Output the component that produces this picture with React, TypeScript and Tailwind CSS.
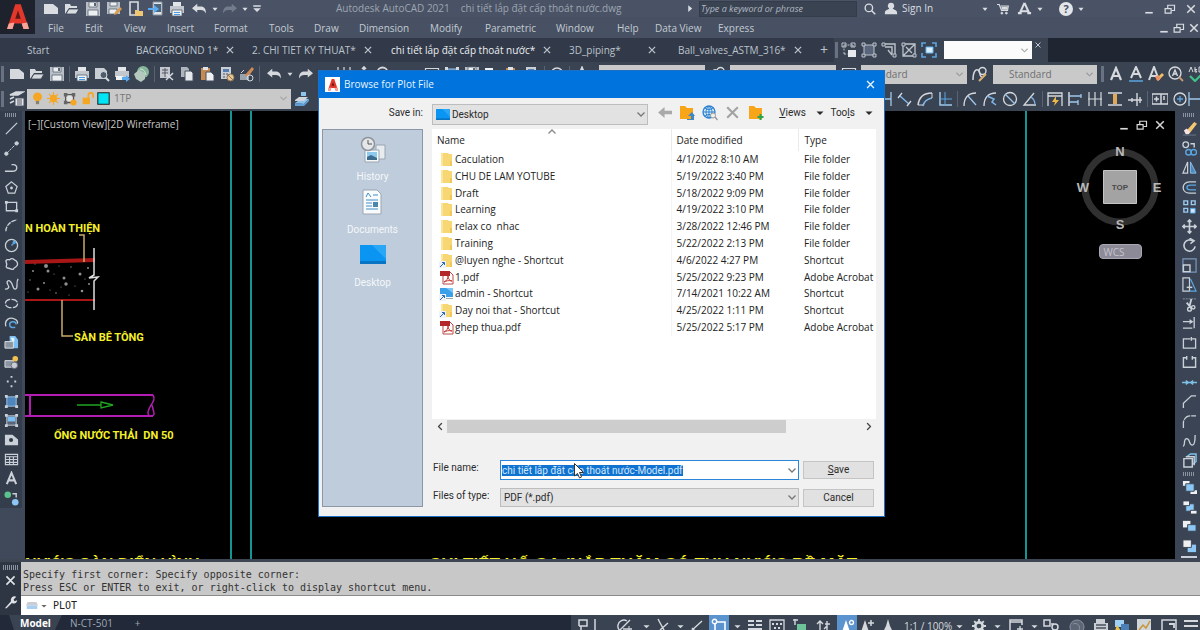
import { useEffect, useRef, type ReactNode } from 'react';

const UI_FONT = "font-['Open_Sans','Noto_Sans',sans-serif]";
const FORM_FONT = "font-['Roboto','Noto_Sans',sans-serif]";

/* 16x16 glyphs, drawn with currentColor unless a tool has its own colour */
const ICONS: Record<string, ReactNode> = {
  new: <path d="M1 3h9l5 4v6H1z" fill="currentColor" stroke="none" />,
  open: <><path d="M1 13V3h5l1 2h6v2H5z" fill="currentColor" stroke="none" /><path d="M5 8h10l-3 5H2z" fill="currentColor" stroke="#3b4453" strokeWidth=".8" /></>,
  save: <><path d="M1 1h14v14H1z" fill="#b9bfc6" stroke="none" /><path d="M4 1h8v5H4zM3 9h10v6H3z" fill="#eceff2" stroke="#5a6472" strokeWidth=".8" /><path d="M9 2h2v3H9z" fill="#5a6472" stroke="none" /></>,
  saveAs: <><path d="M1 1h13v12H1z" fill="#b9bfc6" stroke="none" /><path d="M4 1h7v4H4zM3 8h8v5H3z" fill="#eceff2" stroke="#5a6472" strokeWidth=".8" /><path d="M8 14l1-3 5-5 2 2-5 5z" fill="#d99b4e" stroke="none" /></>,
  openWeb: <><path d="M3 1h8v13H3z" fill="none" strokeWidth="1.6" /><path d="M8 9h3l1 1h4v5H8z" fill="#f0c674" stroke="none" /></>,
  saveWeb: <><path d="M5 1h9v13H5z" fill="#dfe5ea" stroke="#8a939e" /><path d="M6 3h7v8H6z" fill="#4c6680" stroke="none" /><path d="M0 7h6V4l5 4-5 4V9H0z" fill="#5aaaf0" stroke="none" /></>,
  plot: <><path d="M4 1h8v4H4z" fill="#e3e6e9" stroke="none" /><path d="M1 5h14v7H1z" fill="#c3c8ce" stroke="none" /><path d="M3 9h10v6H3z" fill="#f1f4f6" stroke="#566170" strokeWidth=".8" /><path d="M5 11.500h6M5 13.500h6" stroke="#4b9ae4" /></>,
  preview: <><path d="M1 2h9l3 3v8H1z" fill="#c9ced4" stroke="none" /><circle cx="9.500" cy="9" r="3.500" fill="#4f5c6b" /><path d="M12 12l3 3" strokeWidth="2" /></>,
  publish: <><path d="M4 1h8v4H4z" fill="#e3e6e9" stroke="none" /><path d="M1 5h14v6H1z" fill="#c3c8ce" stroke="none" /><path d="M2 10h7v4H2z" fill="#f1f4f6" stroke="none" /><path d="M8 11h4V9l4 4-4 3v-2H8z" fill="#5aaaf0" stroke="none" /></>,
  globe3d: <><circle cx="9" cy="6" r="6" fill="#86b59b" stroke="none" /><path d="M0 8l5-4 6 3v6l-4 3-5-3z" fill="#b4c9bd" stroke="none" /><path d="M6 3c3 0 5 2 6 6" stroke="#d7ebdf" /></>,
  cut: <><path d="M1 1h10v11H1z" fill="#c3c8ce" stroke="none" /><path d="M3 4h6M3 7h6M6 2v9" stroke="#556" /><path d="M7 8l7 6M14 7l-7 7" strokeWidth="1.500" /></>,
  copy: <><path d="M2 1h6l2 2v8H2z" fill="#aeb5bd" stroke="none" /><path d="M6 5h6l2 2v8H6z" fill="#e6e9ec" stroke="#48515f" /></>,
  paste: <><path d="M2 2h9v12H2z" fill="#c58b52" stroke="none" /><path d="M4 1h5v3H4z" fill="#dfe3e7" stroke="none" /><path d="M7 6h5l3 3v6H7z" fill="#eef0f2" stroke="#48515f" /></>,
  match: <><path d="M2 1h10v12H2z" fill="#c9ced4" stroke="none" /><path d="M4 3h6v3H4z" fill="#557fb0" stroke="none" /><path d="M4 8h2m1 0h2M4 11h2" stroke="#556" /><circle cx="11.500" cy="11.500" r="3.500" fill="#e6c79a" stroke="#8b7250" /><path d="M9 9l5 5" stroke="#8b7250" /></>,
  brush: <><path d="M1 8h9v6H1z" fill="#9aa2ac" stroke="none" /><path d="M6 9l7-8 2 2-6 8z" fill="#cf8a55" stroke="none" /><circle cx="11" cy="12" r="3" fill="none" /><path d="M2 7l3-3" /></>,
  undo: <path d="M0 7l6-5v3h4c4 0 6 3 6 8-2-3-3-4-6-4H6v3z" fill="currentColor" stroke="none" />,
  redo: <path d="M16 7l-6-5v3H6c-4 0-6 3-6 8 2-3 3-4 6-4h4v3z" fill="currentColor" stroke="none" />,
  caret: <path d="M4 6h8l-4 5z" fill="currentColor" stroke="none" />,
  caretBig: <path d="M1 5h14l-7 7z" fill="currentColor" stroke="none" />,
  barCaret: <path d="M3 3h10v2H3zM3 7h10l-5 5z" fill="currentColor" stroke="none" />,
  play: <path d="M4 2l7 6-7 6z" fill="currentColor" stroke="none" />,
  search: <><circle cx="6.500" cy="6.500" r="5" strokeWidth="1.800" /><path d="M10 10l5 5" strokeWidth="2" /></>,
  user: <path d="M8 1a3.500 3.500 0 0 1 2 6.500c1 1.500 5 1.500 5 5V14H1v-1.500c0-3.500 4-3.500 5-5A3.500 3.500 0 0 1 8 1z" fill="currentColor" stroke="none" />,
  cart: <><path d="M0 2h3l3 8h8l1-6H5" strokeWidth="1.600" /><path d="M6 5h8v4H6z" fill="currentColor" stroke="none" /><circle cx="6.500" cy="13.500" r="1.300" fill="currentColor" /><circle cx="12.500" cy="13.500" r="1.300" fill="currentColor" /></>,
  appA: <><path d="M8 2l5 11M8 2L3 13M3 11h10" strokeWidth="2.200" /><path d="M1 13h4M11 13h4" strokeWidth="2.500" /></>,
  min: <path d="M3 13h10" strokeWidth="2.200" />,
  restore: <><path d="M1.500 7.500h8v6h-8z" strokeWidth="1.600" /><path d="M5 7V3h9v7h-4" strokeWidth="1.600" /></>,
  close: <path d="M3 3l10 10M13 3L3 13" strokeWidth="2" />,
  layers: <><path d="M1 4l6-3h7l-5 3zM1 8l4-2M1 12l4-2" fill="currentColor" strokeWidth="1.500" /><path d="M6 7h9v8H6z" fill="#e3e6e9" stroke="#48515f" /><path d="M8 9h5M8 11h5M8 13h5" stroke="#556" /></>,
  layerPrev: <><path d="M1 12l6-4h8l-5 5z" fill="#8dc4ee" stroke="none" /><path d="M1 12v3h9l5-5v-2l-5 5z" fill="#5f9fd4" stroke="none" /><path d="M1 9l4-3h9l-4 4H1z" fill="#cfd5db" stroke="none" /><path d="M7 1h5v4H7z" fill="#8dc4ee" stroke="none" /></>,
  bulb: <><circle cx="8" cy="6" r="5.500" fill="#f5a623" stroke="none" /><path d="M6 11h4v4H6z" fill="#8b8070" stroke="none" /></>,
  sun: <><circle cx="8" cy="8" r="4.500" fill="#f5a623" stroke="none" /><path d="M8 0v16M0 8h16M2.500 2.500l11 11M13.500 2.500l-11 11" stroke="#f5a623" strokeWidth="1.300" /></>,
  vpFreeze: <><path d="M3 3h9v9H3z" fill="#e4e4e4" stroke="#555" strokeWidth="1.500" /><path d="M1 1h4v4H1zM10 1h4v4h-4zM1 10h4v4H1z" fill="#666" stroke="none" /><circle cx="12" cy="12" r="3.500" fill="#f5a623" stroke="none" /></>,
  lock: <><path d="M2 7h9v8H2z" fill="#f5a623" stroke="none" /><path d="M9 7V4c0-4 6-4 6 0v3" stroke="#f5a623" strokeWidth="2" /></>,
  swatch: <path d="M1 1h14v14H1z" fill="#00e5f5" stroke="#222" strokeWidth="1.300" />,
  grpA: <><path d="M3 3h9M3 3v9M3 12h4M12 3v3" strokeDasharray="2 1.500" /><path d="M1 1h4v4H1zM10 1h4v4h-4z" /><path d="M7 8h8v7H7z" fill="#e8ebee" stroke="none" /></>,
  grpB: <><path d="M3 3h10v10H3z" fill="#59657a" /><path d="M1 1h3v3H1zM12 1h3v3h-3zM1 12h3v3H1zM12 12h3v3h-3z" fill="#48515f" /></>,
  grpC: <><path d="M1 2h13v12M4 5h7v7M7 8l4 5" strokeWidth="1.400" /><path d="M1 1h3v3H1zM12 12h3v3h-3z" fill="#48515f" /></>,
  grpD: <><path d="M2 2h12v12H2zM2 14L14 2M5 5l6 6" strokeWidth="1.300" /><path d="M1 1h3v3H1zM12 12h3v3h-3z" fill="#48515f" /></>,
  grpE: <><path d="M5 5h7v6H5z" fill="#d9efff" stroke="#66b5f0" /><path d="M1 5V1h4M11 1h4v4M15 11v4h-4M5 15H1v-4" stroke="#5aa5e0" strokeWidth="1.600" /></>,
  leader: <><path d="M1 14C1 5 4 3 6 4c3 1 1 7 4 7" strokeWidth="1.500" /><circle cx="10.500" cy="5" r="3.500" strokeWidth="1.400" /><path d="M7 15l7-7" stroke="#d8b070" strokeWidth="2" /></>,
  letter: <path d="M3 14L8 2l5 12M5 10h6" strokeWidth="2.200" />,
  letterU: <><path d="M3 12L8 1l5 11M5 8h6" strokeWidth="2" /><path d="M1 15h14" stroke="#5aa5e0" strokeWidth="1.500" /></>,
  letterE: <><path d="M1 14L6 1l5 13M3 10h6" strokeWidth="2" /><path d="M8 13l6-6 2 2-6 6z" fill="#f0c060" stroke="none" /><path d="M7 11l3-2 3 3-3 3z" fill="#ef8f6a" stroke="none" /></>,
  findA: <><circle cx="7" cy="7" r="6" strokeWidth="1.400" /><path d="M4.500 10L7 4l2.500 6M5.500 8h3" strokeWidth="1.400" /><path d="M11 11l4 4" stroke="#c79a72" strokeWidth="1.800" /></>,
  spell: <><path d="M1 6l2-5 2 5M7 1v5h2l-2-2.500h2M14 1h-3v5h3" /><path d="M2 10l5 5 8-8" stroke="#3fc18a" strokeWidth="2.200" /></>,
  dimLin: <path d="M2 1v14M14 1v14M2 8h12" stroke="#9ec7ea" strokeWidth="1.300" />,
  dimAln: <><path d="M3 5l9 8" stroke="#7fb7e8" strokeWidth="1.500" /><path d="M1 7l4-5M10 15l4-5" strokeWidth="1.300" /></>,
  dimArc: <><path d="M1 14C2 6 7 2 15 2" strokeWidth="1.500" /><path d="M6 15c1-5 4-7 9-8" stroke="#7fb7e8" strokeWidth="1.500" /><path d="M1 14h5M15 2v5" /></>,
  dimOrd: <><path d="M3 1v13h12" stroke="#9ec7ea" strokeWidth="1.500" /><path d="M8 1v13M3 8h12" stroke="#5aa5e0" /></>,
  dimRad: <><path d="M14 2C6 2 2 7 2 15" strokeWidth="1.300" /><path d="M14 14L6 5" stroke="#9ec7ea" strokeWidth="1.300" /></>,
  dimJog: <><path d="M14 2C6 2 2 7 2 15" strokeWidth="1.300" /><path d="M14 14l-4-3 2-3-7-3" stroke="#7fb7e8" strokeWidth="1.500" /></>,
  dimDia: <><circle cx="8" cy="8" r="6.500" strokeWidth="1.300" /><path d="M3 3l10 10" stroke="#9ec7ea" strokeWidth="1.300" /></>,
  dimAng: <><path d="M14 14H2L12 2" strokeWidth="1.300" /><path d="M9 6c3 2 4 4 4 8" stroke="#7fb7e8" strokeWidth="1.300" /></>,
  dimQk: <><path d="M1 15V2h14v13M1 5h14" strokeWidth="1.300" /><path d="M9 5l-4 6h3l-1 4 5-6H9z" fill="#f0b84a" stroke="none" /></>,
  dimBase: <><path d="M2 1v14" strokeWidth="1.500" /><path d="M2 5h12M2 11h9M14 3v4M11 9v5" stroke="#9ec7ea" strokeWidth="1.300" /></>,
  dimCont: <path d="M2 1v14M8 1v14M14 1v14M1 8h14" strokeWidth="1.200" />,
  dimSp: <><path d="M1 2h14M1 14h14" strokeWidth="1.500" /><path d="M6 3h4v10H6z" fill="#e0a958" stroke="none" /></>,
  dimBr: <path d="M1 9h14M10 2v13M13 6v6M5 7v4" strokeWidth="1.400" />,
  tol: <><path d="M0 3h16v10H0z" strokeWidth="1.300" /><path d="M9 3v10M2 8h5M4.500 5.500v5M12 5v4" strokeWidth="1.500" /></>,
  center: <><circle cx="8" cy="8" r="6" strokeWidth="1.300" /><path d="M8 5v6M5 8h6" stroke="#5aa5e0" strokeWidth="1.300" /></>,
  line: <path d="M2 14L14 2" strokeWidth="1.400" />,
  xline: <><path d="M3 13L13 3" strokeDasharray="3 1" /><circle cx="2.500" cy="13.500" r="1.800" fill="currentColor" /><circle cx="13.500" cy="2.500" r="1.800" fill="currentColor" /></>,
  pline: <path d="M1 12h8c6 0 6-7 1-7H8" strokeWidth="1.400" />,
  polygon: <><path d="M8 2l6 5-2.500 7h-7L2 7z" strokeWidth="1.300" /><circle cx="8" cy="8.500" r="1.500" fill="currentColor" stroke="none" /></>,
  rect: <><path d="M2.500 3.500h11v9h-11z" strokeWidth="1.400" /><path d="M1 2h3v3H1zM12 11h3v3h-3z" fill="currentColor" stroke="none" /></>,
  arc: <path d="M2 14C2 8 7 3 14 2" strokeWidth="1.400" strokeDasharray="5 1" />,
  circle: <><circle cx="8" cy="8" r="6.500" strokeWidth="1.400" /><path d="M8 8l4-4" stroke="#5aa5e0" strokeWidth="1.500" /><circle cx="11" cy="4.500" r="1.800" fill="#5aa5e0" stroke="none" /></>,
  revcloud: <path d="M2 4c1-2 3-1 4-1 2-2 4-1 5 0 3 1 4 4 3 6s-3 2-4 4c-2 1-3-1-5-1-3 0-3-2-2-4z" strokeWidth="1.400" />,
  spline: <path d="M1 13c4 0 5-2 3-5-2-4 1-5 3-3 3 3 2 8 5 8 4-1 0-6 3-11" strokeWidth="1.400" />,
  ellipse: <ellipse cx="8" cy="8" rx="6.500" ry="4.500" strokeWidth="1.400" strokeDasharray="7 1.500" />,
  earc: <><path d="M2 11C0 4 6 1 11 3c3 1 4 4 3 5" strokeWidth="1.400" /><path d="M13 9c0-4-7-4-7 0 0 3 3 4 6 3" stroke="#5aa5e0" strokeWidth="1.600" /></>,
  insert: <><path d="M6 1h6l3 4v9H6z" fill="#7cc0f3" stroke="none" /><path d="M1 7h9v7H1z" fill="#8b94a1" stroke="#dde1e5" /><path d="M7 3h4v4H9z" fill="#e9f4fd" stroke="none" /></>,
  block: <><path d="M1 6h9v7H1z" fill="#8b94a1" stroke="#dde1e5" /><circle cx="12" cy="4" r="3" fill="#f2c14e" stroke="none" /><circle cx="11" cy="11" r="3.500" fill="#c9ced4" stroke="#667" /></>,
  points: <path d="M8 2v2M8 12v2M3 8h2M11 8h2" strokeWidth="2" />,
  hatch: <><path d="M3 3h10v10H3z" fill="#4f86bb" stroke="#9cc4e6" /><path d="M1 1h3v3H1zM12 1h3v3h-3zM1 12h3v3H1zM12 12h3v3h-3z" fill="currentColor" stroke="none" /></>,
  gradient: <><path d="M3 3h10v10H3z" fill="#59657a" stroke="#c9ced4" /><path d="M4 4h8v5H4z" fill="#7cc0f3" stroke="none" /><path d="M1 1h3v3H1zM12 1h3v3h-3zM1 12h3v3H1zM12 12h3v3h-3z" fill="currentColor" stroke="none" /></>,
  region: <><path d="M1 3h8l6 5v6H1z" fill="currentColor" stroke="none" /><circle cx="7.500" cy="8.500" r="2.200" fill="#303846" stroke="none" /></>,
  table: <path d="M1.500 2.500h13v11h-13zM1 5h14M1 8h14M1 11h14M6 5v9M10 5v9" strokeWidth="1.200" />,
  addSel: <><circle cx="4" cy="4" r="3.500" fill="#5cc28d" stroke="none" /><circle cx="12" cy="12" r="3.500" fill="#8cc7f5" stroke="none" /><path d="M9 3h4v4" strokeWidth="1.500" /></>,
  erase: <><path d="M5 10l8-9 3 2-7 9z" fill="#f4c870" stroke="none" /><path d="M2 10l3-2 4 4-2 2H4z" fill="#f8e3e4" stroke="none" /><path d="M1 15h14" stroke="#6d7a8c" /></>,
  copy2: <><circle cx="4" cy="4" r="3" strokeWidth="1.400" /><path d="M9 3h4v4" strokeWidth="1.500" /><circle cx="7" cy="12" r="3" stroke="#5aa5e0" strokeWidth="1.500" /><circle cx="12.500" cy="12" r="3" stroke="#5aa5e0" strokeWidth="1.500" /></>,
  mirror: <><path d="M6 2v12H1z" strokeWidth="1.300" /><path d="M9 2v12h6z" fill="#4f86bb" stroke="#8cc0ec" /></>,
  offset: <><path d="M15 2H8C-1 2-1 14 8 14h7" strokeWidth="1.400" /><path d="M15 5.500H9c-5 0-5 5 0 5h6" stroke="#5aa5e0" strokeWidth="1.400" /></>,
  array: <><path d="M2 2h4v4H2zM10 2h4v4h-4zM2 10h4v4H2z" stroke="#9cc9ee" strokeWidth="1.500" /><path d="M9 10h5v5H9z" fill="#cfe6fa" stroke="#5aa5e0" /></>,
  move: <path d="M8 1v14M1 8h14M6 3l2-2 2 2M6 13l2 2 2-2M3 6L1 8l2 2M13 6l2 2-2 2" strokeWidth="1.700" />,
  rotate: <><path d="M12 3.500A6 6 0 1 0 14 9" strokeWidth="1.700" /><path d="M8 0l5 3-4 3" strokeWidth="1.500" /></>,
  scale: <><path d="M1 1h14v14H1z" stroke="#7898ba" strokeWidth="1.300" /><path d="M1.500 7.500h7v7h-7z" strokeWidth="1.500" /></>,
  stretch: <><path d="M1 1h7v14H1z" strokeWidth="1.300" /><path d="M9 2l6 13H8" stroke="#5aa5e0" strokeWidth="1.300" /><path d="M5 11h6" strokeWidth="1.600" /></>,
  trim: <><path d="M1 2h14" strokeDasharray="2 1" stroke="#8a95a5" /><path d="M10 2L8 10M5 6l5 6" strokeWidth="2" /><circle cx="8" cy="13" r="2" strokeWidth="1.500" /><circle cx="12" cy="11" r="1.800" strokeWidth="1.500" /></>,
  extend: <path d="M1 6h9M8 4l3 2-3 2M13 1v12M1 13h10" strokeWidth="1.400" />,
  breakPt: <path d="M10 3h4.500v10h-13V3H9M10 1v4" strokeWidth="1.400" />,
  breakIt: <path d="M5 3H1.500v10h13V3H11M5 1v4M11 1v4" strokeWidth="1.500" />,
  join: <path d="M0 8h16M4 6l3 2-3 2M12 6L9 8l3 2" stroke="#7cc0e8" strokeWidth="1.400" />,
  chamfer: <path d="M1.500 15v-5L10 2h5" strokeWidth="1.400" />,
  fillet: <path d="M1.500 15V9C2 5 5 2 9 2h6" strokeWidth="1.400" strokeDasharray="8 1" />,
  blend: <path d="M1 14c3 0 0-8 4-8s2 7 6 7c3 0 3-6 3-11" strokeWidth="1.400" />,
  explode: <><path d="M5 4l4-3h6v8l-3 3" stroke="#7cc0e8" strokeWidth="1.600" /><path d="M2 6h9v9H2zM4 4h9v9" strokeWidth="1.500" /></>,
  orderFront: <><path d="M1 1h7v5H1zM9 11h7v4H9z" fill="#eef0f2" stroke="none" /><path d="M4 4h9v8H4z" fill="#8cc7f5" stroke="#3b4453" /></>,
  orderBack: <><path d="M4 4h9v8H4z" fill="#8cc7f5" stroke="#3b4453" /><path d="M1 1h7v5H1zM9 11h7v4H9z" fill="#eef0f2" stroke="#3b4453" /></>,
  orderUp: <><path d="M1 2h8v7H1z" fill="#eef0f2" stroke="none" /><path d="M6 6h9v7H6z" fill="#8cc7f5" stroke="#3b4453" /></>,
  orderDn: <><path d="M6 6h9v8H6z" fill="#8cc7f5" stroke="none" /><path d="M1 1h9v8H1z" fill="#eef0f2" stroke="#3b4453" /></>,
  wrench: <path d="M1 15l7-8c-1-4 3-7 6-5l-3 3 1 2 3-1c0 3-3 5-6 3l-6 6z" fill="currentColor" stroke="none" />,
  infer: <path d="M6 8V2h8v6H6M2 14h6V8" strokeWidth="1.500" />,
  ortho: <path d="M3 1v12h10" strokeWidth="1.500" />,
  polar: <><path d="M10 3A6 6 0 1 0 8 14M3 12L13 2M6 11h9" strokeWidth="1.400" /><path d="M12 8v6" /></>,
  iso: <path d="M3 1l7 13M13 5L5 12" strokeWidth="1.400" />,
  track: <path d="M1 14L13 3M3 10l3 3" strokeWidth="1.400" />,
  osnap: <><path d="M4 4h10v11M4 4v11" strokeWidth="1.600" /><circle cx="3.500" cy="3.500" r="2.200" fill="#5b93cf" strokeWidth="1.400" /></>,
  lwt: <path d="M1 3h6M9 3h6M1 7h6M9 7h6M1 11h14" strokeWidth="2" />,
  transp: <><path d="M1 2h14v12H1z" strokeWidth="1.300" /><path d="M3 5h2v2H3zM7 5h2v2H7zM11 5h2v2h-2zM5 9h2v2H5zM9 9h2v2H9z" fill="currentColor" stroke="none" /></>,
  cycle: <><path d="M1 2h5M3 1v6" strokeWidth="1.400" /><path d="M5 6h9v9H5z" fill="#6fc39a" stroke="none" /></>,
  ucs: <path d="M4 14V3M1 6l3-3 3 3M8 11l3-3M11 3v11M9 6h5" strokeWidth="1.400" />,
  anno: <><path d="M7 2l4 12H3z" fill="currentColor" stroke="none" /><circle cx="12.500" cy="4.500" r="2" strokeWidth="1.300" /></>,
  annoAdd: <><path d="M6 2l4 12H2z" fill="currentColor" stroke="none" /><path d="M12 2v6M9 5h6" strokeWidth="1.500" /></>,
  annoScale: <path d="M8 1l2 7 3 6H3l3-6z" fill="currentColor" stroke="none" />,
  gear: <><circle cx="8" cy="8" r="4.200" strokeWidth="3" /><path d="M8 0v3M8 13v3M0 8h3M13 8h3M2.500 2.500l2 2M11.500 11.500l2 2M13.500 2.500l-2 2M4.500 11.500l-2 2" strokeWidth="2.200" /></>,
  monitor: <><path d="M11 14H2V2h12v5M2 4h12" strokeWidth="1.500" /><path d="M12 8v6M9 11h6" strokeWidth="1.300" /></>,
  units: <><path d="M1 2h6v6H1zM8 6h3" strokeWidth="1.500" /><circle cx="12" cy="9" r="3" strokeWidth="1.500" /></>,
  disk: <><circle cx="8" cy="9" r="7" fill="#5d6675" stroke="#8b93a0" /><path d="M4 6c4-2 8 2 6 6" stroke="#8b93a0" /></>,
  printer: <><path d="M3 1h9v4H3zM1 5h14v8H1z" fill="#c9ced4" stroke="none" /><path d="M3 7h10M3 10h10" stroke="#48515f" strokeWidth="1.400" /></>,
  hw: <><path d="M1 2h9v7H1z" fill="#9fd0f5" stroke="none" /><path d="M7 6h8v7H7z" fill="#4b7fb5" stroke="none" /><path d="M3 7l4 6H1z" fill="#e8c24a" stroke="none" /></>,
  perf: <><path d="M1 1h14v14H1z" fill="#cfd4d9" stroke="none" /><path d="M3 12l4-5 3 3 4-7" stroke="#c99436" strokeWidth="1.500" /></>,
  clean: <><path d="M1 2h14v12H1z" strokeWidth="1.500" /><path d="M8 6h5v4" strokeWidth="1.800" /></>,
  menu: <path d="M1 3h14M1 8h14M1 13h14" strokeWidth="1.800" />,
};

function Icon({ name, className = 'size-4' }: { name: string; className?: string }) {
  return (
    <svg viewBox="0 0 16 16" className={`shrink-0 ${className}`} fill="none" stroke="currentColor" aria-hidden="true">
      {ICONS[name]}
    </svg>
  );
}

function Tool({ name, className = 'w-5', icon = 'size-4' }: { name: string; className?: string; icon?: string }) {
  return (
    <button type="button" aria-label={name} className={`flex shrink-0 items-center justify-center ${className}`}>
      <Icon name={name} className={icon} />
    </button>
  );
}

const Tools = ({ names, className }: { names: string[]; className?: string }) => (
  <>{names.map((n) => <Tool key={n} name={n} className={className} />)}</>
);

const Grip = () => <span className="mx-px h-4 w-[3px] shrink-0 bg-[#687283]" />;
const Sep = () => <span className="mx-[2px] h-4 w-px shrink-0 bg-[#596374]" />;

function RedA({ className }: { className: string }) {
  return (
    <svg viewBox="0 0 24 28" className={className} aria-hidden="true">
      <path d="M0 27L9 0h6l9 27h-6l-2-6H8l-2 6z" fill="#e2382c" />
      <path d="M12 7l3 9H9z" fill="#5d1713" />
      <path d="M0 27l2-6 6-1-2 7zM18 27l-2-6 6-1 2 7z" fill="#f6a59b" />
    </svg>
  );
}

/* ---------- top chrome ---------- */

const MENUS = [
  ['File', 'w-[37px]'], ['Edit', 'w-[39px]'], ['View', 'w-[43px]'], ['Insert', 'w-[47px]'],
  ['Format', 'w-[55px]'], ['Tools', 'w-[45px]'], ['Draw', 'w-[45px]'], ['Dimension', 'w-[71px]'],
  ['Modify', 'w-[55px]'], ['Parametric', 'w-[71px]'], ['Window', 'w-[61px]'], ['Help', 'w-[38px]'],
  ['Data View', 'w-[63px]'], ['Express', 'w-[40px]'],
];

const FILE_TABS = [
  { name: 'Start', width: 'w-[109px]' },
  { name: 'BACKGROUND 1*', width: 'w-[116px]' },
  { name: '2. CHI TIET KY THUAT*', width: 'w-[139px]' },
  { name: 'chi tiết lắp đặt cấp thoát nước*', width: 'w-[178px]', active: true },
  { name: '3D_piping*', width: 'w-[109px]' },
  { name: 'Ball_valves_ASTM_316*', width: 'w-[136px]' },
];

function Header() {
  return (
    <header className="flex h-[38px] shrink-0 bg-[#475163] text-[#d9dde2]">
      <div className="flex h-[34px] w-[35px] shrink-0 items-center justify-center bg-[#1d222c]">
        <RedA className="h-[26px] w-[22px]" />
      </div>
      <div className="flex min-w-0 flex-1 flex-col">
        <div className="flex h-[17px] items-center bg-[#4a5365] pl-[5px]">
          <Tools className="w-[21px]" names={['new', 'open', 'save', 'saveAs', 'openWeb', 'saveWeb', 'plot']} />
          <Tool name="undo" className="w-6" icon="size-[14px]" />
          <Tool name="caret" className="w-2" icon="size-[10px]" />
          <span className="flex text-[#727c8b]"><Tool name="redo" className="w-[22px]" icon="size-[14px]" /></span>
          <Tool name="caret" className="w-2" icon="size-[10px]" />
          <Tool name="barCaret" className="w-4" icon="size-3" />
          <h1 className="ml-[71px] flex gap-[11px] text-[10px] whitespace-pre text-[#9da5b1]">
            <span>Autodesk AutoCAD 2021</span><span>chi tiết lắp đặt cấp thoát nước.dwg</span>
          </h1>
          <div className="ml-auto flex items-center">
            <Icon name="play" className="size-[9px]" />
            <input aria-label="Search help" placeholder="Type a keyword or phrase" className="mr-[3px] ml-1 h-4 w-[158px] border border-[#343c4a] bg-[#3a4352] px-px text-[9px] italic placeholder:text-[#b1b8c2]" />
            <Tool name="search" className="w-5" icon="size-3" />
            <button type="button" className="flex w-[100px] items-center gap-1 text-[10px]"><Icon name="user" className="ml-1 size-[14px]" />Sign In</button>
            <Tool name="caret" className="w-[9px]" icon="size-[10px]" />
            <Tool name="cart" className="w-7" icon="size-3" />
            <Tool name="appA" className="w-[15px]" icon="size-[15px]" />
            <Tool name="caret" className="w-[15px]" icon="size-[10px]" />
            <button type="button" aria-label="Help" className="ml-3 size-[14px] rounded-full bg-[#e3e6e9] text-[11px] leading-[14px] font-bold text-[#475163]">?</button>
            <Tool name="caret" className="w-4" icon="size-[10px]" />
            <span className="w-[54px]" />
            <div className="flex items-center gap-[9px] pr-[3px]">
              <Tool name="min" className="w-3" icon="size-3" />
              <Tool name="restore" className="w-3" icon="size-3" />
              <Tool name="close" className="w-3" icon="size-3" />
            </div>
          </div>
        </div>
        <nav className="flex flex-1 items-center pt-px pl-[13px] text-[10px] text-[#c4cad2]">
          {MENUS.map(([label, width]) => (
            <button key={label} type="button" className={`shrink-0 text-left whitespace-nowrap ${width}`}>{label}</button>
          ))}
          <span className="flex-1" />
          <div className="flex gap-[3px] text-[#d9dde2]">
            <Tool name="min" className="w-3" icon="size-3" />
            <Tool name="restore" className="w-3" icon="size-3" />
            <Tool name="close" className="w-3" icon="size-3" />
          </div>
        </nav>
      </div>
    </header>
  );
}

function FileTabs() {
  return (
    <div className="flex h-6 shrink-0 items-center bg-[#1f2531] text-[#bcc3cc]">
      <div className="flex h-full items-center bg-[#323a49] pl-[27px] text-[10px]">
        {FILE_TABS.map((t) => (
          <div key={t.name} className={`flex shrink-0 items-center gap-[6px] ${t.width}`}>
            <button type="button" className={`whitespace-nowrap ${t.active ? 'text-[#eceff2]' : ''}`}>{t.name}</button>
            {t.name !== 'Start' && <Tool name="close" className={t.name === '3D_piping*' ? 'mr-5 ml-auto w-3' : 'w-3'} icon="size-[10px]" />}
          </div>
        ))}
        <button type="button" aria-label="New tab" className="w-5 text-center text-sm">+</button>
      </div>
      <div className="flex h-full items-center bg-[#3a4352] pr-1">
        <Grip />
        <Tools names={['grpA', 'grpB', 'grpC', 'grpD', 'grpE']} />
        <div className="relative ml-[5px] w-[88px]">
          <select aria-label="Group" className="block h-[18px] w-full appearance-none bg-[#fbfbfb]" />
          <Chevron className="absolute top-[7px] right-1 h-[5px] w-[7px] text-[#aaa]" />
        </div>
        <Tool name="close" className="w-3 self-start pt-[3px]" icon="size-2" />
      </div>
    </div>
  );
}

function GraySelect({ label, value, className, pad = 'pl-4' }: { label: string; value?: string; className: string; pad?: string }) {
  return (
    <div className={`relative shrink-0 ${className}`}>
      <select aria-label={label} className={`block h-[19px] w-full appearance-none bg-[#c9c9c9] text-[10px] text-[#6f6f6f] ${pad}`}>
        <option>{value}</option>
      </select>
      <Chevron className="absolute top-[7px] right-1 h-[5px] w-[7px] text-[#9a9a9a]" />
    </div>
  );
}

function Chevron({ className }: { className: string }) {
  return (
    <svg viewBox="0 0 8 5" className={className} fill="none" stroke="currentColor" strokeWidth="1.3" aria-hidden="true">
      <path d="M.500.500L4 4 7.500.500" />
    </svg>
  );
}

function Toolbars() {
  return (
    <div className="shrink-0 overflow-hidden bg-[#3a4352] text-[#d5d9de]">
      <div className="flex h-6 items-center justify-between">
        <div className="flex items-center">
          <Grip /><span className="w-[2px]" />
          <Tools names={['new', 'open', 'save']} />
          <Sep />
          <Tools names={['plot', 'preview', 'publish', 'globe3d']} />
          <Sep />
          <Tools names={['cut', 'copy', 'paste', 'match', 'brush']} />
          <Sep />
          <Tool name="undo" className="w-6" icon="size-[14px]" />
          <Tool name="caret" className="w-2" icon="size-[10px]" />
          <Tool name="redo" className="w-6" icon="size-[14px]" />
          <span className="w-4" />
          <Tools names={['dimCont', 'move', 'search']} />
          <span className="w-7" />
          <Tools names={['table', 'hatch', 'save', 'orderUp', 'paste', 'match']} />
          <Sep />
          <Tool name="center" /><Sep /><Tool name="letter" />
        </div>
        <div className="-mr-[6px] flex items-center">
          <GraySelect label="Text style" className="w-[106px]" />
          <Tool name="leader" className="w-[25px]" />
          <GraySelect label="Dimension style" className="w-[106px]" />
          <Tool name="table" className="w-[25px]" />
          <GraySelect label="Table style" value="Standard" className="w-[106px]" pad="pl-1" />
          <Tool name="leader" className="w-[26px]" />
          <GraySelect label="Multileader style" value="Standard" className="w-[104px]" />
          <span className="w-[3px]" /><Grip /><span className="w-px" />
          <Tools names={['letter', 'letterU', 'letterE', 'findA', 'spell']} />
        </div>
      </div>
      <div className="flex h-[25px] items-center justify-between">
        <div className="flex items-center">
          <Grip /><span className="w-[2px]" />
          <Tool name="layers" />
          <div className="relative flex h-5 w-[264px] items-center bg-[#c9c9c9] pl-1 text-[#777]">
            <Icon name="bulb" className="mr-[3px] size-[13px]" />
            <Icon name="sun" className="mr-[3px] size-[13px]" />
            <Icon name="vpFreeze" className="mr-1 size-[14px]" />
            <Icon name="lock" className="mr-[3px] size-[13px]" />
            <Icon name="swatch" className="size-[13px]" />
            <select aria-label="Layer" className="h-full min-w-0 flex-1 appearance-none pl-1 text-[10px]"><option>1TP</option></select>
            <Chevron className="absolute right-1 h-[5px] w-[7px] text-[#a5a5a5]" />
          </div>
          <Tool name="layerPrev" className="w-[22px]" />
        </div>
        <div className="flex items-center">
          <Tools names={['dimLin', 'dimAln', 'dimArc', 'dimOrd']} />
          <Sep />
          <Tools names={['dimRad', 'dimJog', 'dimDia', 'dimAng']} />
          <Sep />
          <Tools names={['dimQk', 'dimBase', 'dimCont', 'dimSp', 'dimBr']} />
          <Sep />
          <Tools names={['tol', 'center']} />
          <Tool name="dimLin" className="w-[10px]" />
        </div>
      </div>
    </div>
  );
}

/* ---------- drawing area ---------- */

const DRAW_TOOLS = ['line', 'xline', 'pline', 'polygon', 'rect', 'arc', 'circle', 'revcloud', 'spline', 'ellipse', 'earc', 'insert', 'block', 'points', 'hatch', 'gradient', 'region', 'table', 'letter', 'addSel'];
const MODIFY_TOOLS = ['erase', 'copy2', 'mirror', 'offset', 'array', 'move', 'rotate', 'scale', 'stretch', 'trim', 'extend', 'breakPt', 'breakIt', 'join', 'chamfer', 'fillet', 'blend', 'explode'];
const ORDER_TOOLS = ['orderFront', 'orderBack', 'orderUp', 'orderDn'];

const RailGrip = () => <span className="my-[2px] h-[4px] w-3 shrink-0 bg-[repeating-linear-gradient(90deg,#8a93a0_0_1px,transparent_1px_2px)]" />;

const STONES = [[8, 160, 1], [21, 155, 2], [23, 160, 1.500], [39, 167, 1.500], [41, 173, 1.700], [55, 163, 1.500], [63, 157, 1], [19, 172, 1], [13, 178, 1.500], [31, 182, .8], [57, 180, 1.300], [64, 173, 1], [5, 169, .7], [46, 156, .7], [29, 163, .6], [50, 175, .6], [36, 176, .6], [10, 153, .6], [25, 179, .6], [3, 181, .6], [44, 184, .6], [34, 155, .6], [60, 168, .6]];

function Drawing() {
  return (
    <svg className="absolute inset-0 h-full w-full" fill="none">
      <g stroke="#159494" strokeWidth="2">
        <path d="M206 0v900M226 0v900M1001 0v900" />
      </g>
      <g stroke="#a81616">
        <path d="M0 151l70-2" strokeWidth="4" />
        <path d="M0 189h70" strokeWidth="2" />
      </g>
      {STONES.map(([x, y, r]) => <circle key={`${x}-${y}`} cx={x} cy={y} r={r} fill="#8f8f8f" />)}
      <path d="M69 137v27l-5 3 9-1-4 4v29" stroke="#dedede" strokeWidth="1.500" />
      <path d="M54 124h5v27M37 189v36h11" stroke="#c9ab6b" strokeWidth="1.500" />
      <g stroke="#b31db3" strokeWidth="2">
        <path d="M0 284h128M0 305h128M5 284v21" />
        <path d="M128 284c4 6-5 11-5 18 0 5 7 3 6 0l-2-8" strokeWidth="1.500" />
      </g>
      <path d="M52 294h24M76 291l12 3-12 3z" stroke="#1fa51f" strokeWidth="1.300" />
      <g fill="#f5f02a" fontSize="11" className="font-['Roboto',sans-serif] font-bold">
        <text x="0" y="121">N HOÀN THIỆN</text>
        <text x="49" y="230">SÀN BÊ TÔNG</text>
        <text x="29" y="328" className="whitespace-pre">ỐNG NƯỚC THẢI  DN 50</text>
      </g>
      <g fill="#f5f02a" className="font-['Liberation_Sans',sans-serif] font-bold">
        <text x="0" y="459" fontSize="16">NƯỚC SÀN ĐIỂN HÌNH</text>
        <text x="404" y="459" fontSize="17">CHI TIẾT HỐ GA (NẮP THĂM CÓ THU NƯỚC BỀ MẶT</text>
      </g>
    </svg>
  );
}

function ViewCube() {
  return (
    <div className="absolute top-2 right-[15px] flex w-20 flex-col items-center text-[#d8d8d8]">
      <div className="-mr-[6px] flex gap-[6px] self-end">
        <Tool name="min" className="w-3" icon="size-3" />
        <Tool name="restore" className="w-3" icon="size-3" />
        <Tool name="close" className="w-3" icon="size-3" />
      </div>
      <svg viewBox="0 0 90 90" className="mt-[10px] size-[90px] shrink-0 font-['Liberation_Sans',sans-serif]">
        <circle cx="45" cy="46" r="35" fill="none" stroke="#303030" strokeWidth="7" />
        <path d="M28.500 29.500h33v33h-33z" fill="#a3a3a3" stroke="#c4c4c4" />
        <text x="45" y="49" fontSize="8" fontWeight="700" textAnchor="middle" fill="#4a4a4a">TOP</text>
        <g fill="#b9b9b9" fontSize="13" fontWeight="700" textAnchor="middle">
          <text x="45" y="15">N</text><text x="45" y="88">S</text><text x="8" y="51">W</text><text x="82" y="51">E</text>
        </g>
      </svg>
      <button type="button" className="mt-[13px] h-[15px] w-[43px] rounded border border-[#a9a7b3] bg-[#8c8a96] pl-1 text-left text-[10px] leading-3 text-[#c4c3cc]">WCS</button>
    </div>
  );
}

function Workspace() {
  return (
    <main className="flex min-h-0 flex-1 text-[#c9d0d8]">
      <aside className="w-[25px] shrink-0 overflow-hidden bg-[#404959]">
        <div className="flex h-[397px] w-[22px] flex-col items-center bg-[#343d4c]">
          <RailGrip />
          {DRAW_TOOLS.map((n) => <Tool key={n} name={n} className="w-[18px] flex-1" icon="size-[15px]" />)}
        </div>
      </aside>
      <section className="relative min-w-0 flex-1 overflow-hidden bg-black">
        <Drawing />
        <p className="relative pt-[6px] pl-[3px] text-[10px] leading-[14px] text-[#c8c8c8]">[−][Custom View][2D Wireframe]</p>
        <ViewCube />
      </section>
      <aside className="flex w-[25px] shrink-0 flex-col items-center overflow-hidden bg-[#3a4454] pl-[3px]">
        <RailGrip />
        <div className="flex h-[351px] shrink-0 flex-col">
          {MODIFY_TOOLS.map((n) => <Tool key={n} name={n} className="flex-1" icon="size-[15px]" />)}
        </div>
        <RailGrip />
        <div className="flex h-[78px] shrink-0 flex-col">
          {ORDER_TOOLS.map((n) => <Tool key={n} name={n} className="flex-1" icon="size-[15px]" />)}
        </div>
        <span className="h-[2px] w-4 shrink-0 bg-[#c9d0d8]" />
      </aside>
    </main>
  );
}

/* ---------- command line and status bar ---------- */

function CommandLine() {
  return (
    <div className="flex h-[56px] shrink-0 border-t-[3px] border-[#3f4653] bg-[#2f3643] font-['DejaVu_Sans_Mono',monospace] text-[10px]">
      <div className="flex w-[21px] shrink-0 flex-col items-center pt-[3px] text-[#dfe3e7]">
        <span className="h-[5px] w-4 bg-[repeating-linear-gradient(90deg,#8a93a0_0_1px,transparent_1px_2px)]" />
        <Tool name="close" className="mt-[3px] h-[14px]" icon="size-[13px]" />
        <Tool name="wrench" className="mt-[7px] h-4" icon="size-[14px]" />
      </div>
      <div className="flex flex-1 flex-col">
        <div className="h-[33px] bg-[#c8c8c8] px-[2px] pt-[6px] leading-[13px] whitespace-pre text-[#333]">
          <p>Specify first corner: Specify opposite corner:</p>
          <p>Press ESC or ENTER to exit, or right-click to display shortcut menu.</p>
        </div>
        <label className="flex flex-1 items-center border-t border-[#8b8b8b] bg-white pl-1 text-[#222]">
          <svg viewBox="0 0 16 10" className="h-[9px] w-[14px]"><path d="M3 1h10l2 4H1z" fill="#c9ced4" /><path d="M2 5h12v4H2z" fill="#a9cff0" /></svg>
          <span className="text-[#666]"><Icon name="caretBig" className="mx-[2px] size-[6px]" /></span>
          <input aria-label="Command" defaultValue="PLOT" className="ml-1 flex-1 outline-none" />
        </label>
      </div>
    </div>
  );
}

function StatusBar() {
  return (
    <footer className="flex h-[15px] shrink-0 items-start justify-between overflow-hidden bg-[#222938] text-[10px] leading-[14px] text-[#d5d9de]">
      <div className="flex">
        <button type="button" className="h-[15px] bg-[#3a4352] pr-[11px] pl-5 font-bold text-white [clip-path:polygon(9px_0,100%_0,calc(100%-7px)_100%,14px_100%)]">Model</button>
        <button type="button" className="px-2 text-[#9fa8b4]">N-CT-501</button>
        <button type="button" aria-label="New layout" className="px-[14px] text-[#9fa8b4]">+</button>
      </div>
      <div className="flex h-[22px] items-center bg-[#3a4352]">
        <Tool name="infer" /><Tool name="ortho" className="w-[18px]" />
        <Tool name="polar" className="w-8" /><Tool name="caretBig" className="w-[10px]" icon="size-[7px]" />
        <Tool name="iso" className="w-6" /><Tool name="caretBig" className="w-[10px]" icon="size-[7px]" />
        <Tool name="track" className="w-6" />
        <Tool name="osnap" className="h-full w-5 bg-[#5b93cf] text-white" />
        <Tool name="caretBig" className="w-4" icon="size-[7px]" />
        <Tool name="lwt" /><Tool name="transp" className="w-[23px]" /><Tool name="cycle" className="w-[23px]" /><Tool name="ucs" className="w-[26px]" />
        <Tool name="anno" className="h-full w-5 bg-[#5b93cf] text-white" />
        <Tool name="annoAdd" /><Tool name="annoScale" className="w-[22px]" />
        <button type="button" className="w-[53px] pl-[5px] text-left whitespace-nowrap">1:1 / 100%</button>
        <Tool name="caretBig" className="w-[14px]" icon="size-[7px]" />
        <Tool name="gear" className="w-[26px]" icon="size-[14px]" /><Tool name="caretBig" className="w-[10px]" icon="size-[7px]" />
        <Tool name="monitor" className="w-[27px]" /><Tool name="caretBig" className="w-[10px]" icon="size-[7px]" />
        <Tool name="units" className="w-6" /><Tool name="disk" className="w-[27px]" />
        <Tool name="printer" className="w-[22px]" /><Tool name="hw" className="w-5" /><Tool name="perf" className="w-6" />
        <Tool name="clean" className="w-[26px]" /><Tool name="menu" className="w-[18px]" />
      </div>
    </footer>
  );
}

/* ---------- save dialog ---------- */

const FILES = [
  { name: 'Caculation', date: '4/1/2022 8:10 AM', type: 'File folder', icon: 'folder' },
  { name: 'CHU DE LAM YOTUBE', date: '5/19/2022 3:40 PM', type: 'File folder', icon: 'folder' },
  { name: 'Draft', date: '5/18/2022 9:09 PM', type: 'File folder', icon: 'folder' },
  { name: 'Learning', date: '4/19/2022 3:10 PM', type: 'File folder', icon: 'folder' },
  { name: 'relax co  nhac', date: '3/28/2022 12:46 PM', type: 'File folder', icon: 'folder' },
  { name: 'Training', date: '5/22/2022 2:13 PM', type: 'File folder', icon: 'folder' },
  { name: '@luyen nghe - Shortcut', date: '4/6/2022 4:27 PM', type: 'Shortcut', icon: 'folderLink' },
  { name: '1.pdf', date: '5/25/2022 9:23 PM', type: 'Adobe Acrobat', icon: 'pdf' },
  { name: 'admin - Shortcut', date: '7/14/2021 10:22 AM', type: 'Shortcut', icon: 'screenLink' },
  { name: 'Day noi that - Shortcut', date: '4/25/2022 1:11 PM', type: 'Shortcut', icon: 'folderLink' },
  { name: 'ghep thua.pdf', date: '5/25/2022 5:17 PM', type: 'Adobe Acrobat', icon: 'pdf' },
];

function FileIcon({ kind }: { kind: string }) {
  return (
    <svg viewBox="0 0 15 15" className="size-[15px] shrink-0" aria-hidden="true">
      {kind.startsWith('folder') && <><path d="M2 1h7l1 1h3v12H2z" fill="#f7d774" /><path d="M2 1h2v13H2z" fill="#fbe59b" /><path d="M11 9h2v5h-2z" fill="#efc75a" /></>}
      {kind === 'screenLink' && <><path d="M1 2h13v9H1z" fill="#3aa0ea" /><path d="M7 2h7v5z" fill="#7cc6f7" /><path d="M5 12h9v1H5z" fill="#9aa" /></>}
      {kind.endsWith('Link') && <><path d="M0 8h7v7H0z" fill="#eef3f8" /><path d="M1 14l4-4M3 9.500h2.500V12" stroke="#2a63b8" fill="none" /></>}
      {kind === 'pdf' && <><path d="M4 2h7l3 3v9H4z" fill="#fff" stroke="#b74a4a" /><path d="M1 1h10v5H1z" fill="#b3262a" /><path d="M5 12c3-1 4-4 4-6 0 3 2 5 4 5-3-1-6 0-8 1z" fill="none" stroke="#c8362f" /></>}
    </svg>
  );
}

const Screen = ({ className }: { className: string }) => (
  <svg viewBox="0 0 26 19" className={className} preserveAspectRatio="none" aria-hidden="true">
    <path d="M0 0h26v19H0z" fill="#0a95f3" /><path d="M0 16h26v3H0z" fill="#0a74c4" /><path d="M12 0h14v14z" fill="#2aa6f6" />
  </svg>
);

function Places() {
  return (
    <nav className="flex h-[378px] w-[101px] shrink-0 flex-col items-center gap-[5px] border border-[#8b97a6] bg-[#bfccdb] pt-[6px] text-[10px] text-[#f4f7fa]">
      <button type="button" className="flex h-12 flex-col items-center justify-between">
        <svg viewBox="0 0 28 28" className="size-7">
          <path d="M17 9h9v14h-9z" fill="#e9ecef" stroke="#9aa5b1" /><path d="M6 14h14v12H6z" fill="#f5f7f8" stroke="#9aa5b1" />
          <path d="M8 16h10v8H8z" fill="#8dc8ee" /><path d="M8 21l4-2 6 3v2H8z" fill="#3c6b8c" />
          <circle cx="9" cy="8" r="6.500" fill="#e4e6e8" stroke="#8d949c" strokeWidth="1.500" /><path d="M9 4v4h4" stroke="#555" fill="none" />
        </svg>
        <span>History</span>
      </button>
      <button type="button" className="flex h-12 flex-col items-center justify-between">
        <svg viewBox="0 0 20 26" className="h-[26px] w-5">
          <path d="M1 1h14l4 4v20H1z" fill="#fafbfc" stroke="#9aa5b1" /><path d="M4 8l2-4 3 4M11 6h5M4 11h12M4 14h6M4 17h6M4 20h12" stroke="#3f8fc9" fill="none" /><path d="M11 13h5v5h-5z" fill="#4d86ad" />
        </svg>
        <span>Documents</span>
      </button>
      <button type="button" className="flex h-12 flex-col items-center justify-between">
        <Screen className="mt-[3px] h-[19px] w-[26px]" />
        <span>Desktop</span>
      </button>
    </nav>
  );
}

function FileList() {
  return (
    <div className={`h-[290px] overflow-hidden bg-white ${UI_FONT}`}>
      <table className="h-[207px] w-full table-fixed border-collapse text-left text-[10px] leading-[15px] text-[#222]">
        <colgroup><col className="w-[239px]" /><col className="w-[127px]" /><col /></colgroup>
        <thead>
          <tr className="h-[22px]">
            <th className="relative pl-[5px] font-normal">Name<Chevron className="absolute top-0 left-[116px] h-[5px] w-2 rotate-180 text-[#888]" /></th>
            <th className="border-l border-[#eaeaea] pl-[5px] font-normal">Date modified</th>
            <th className="border-l border-[#eaeaea] pl-[6px] font-normal">Type</th>
          </tr>
        </thead>
        <tbody>
          {FILES.map((f) => (
            <tr key={f.name}>
              <td className="p-0 pl-[7px]"><span className="flex items-center gap-px whitespace-pre"><FileIcon kind={f.icon} />{f.name}</span></td>
              <td className="border-l border-[#f4f4f4] p-0 pl-[5px] whitespace-nowrap">{f.date}</td>
              <td className="p-0 pl-[6px] whitespace-nowrap">{f.type}</td>
            </tr>
          ))}
        </tbody>
      </table>
    </div>
  );
}

function DialogTools() {
  return (
    <div className="flex flex-1 items-center justify-between pr-[3px] pl-[10px] text-[10px]">
      <button type="button" aria-label="Back"><svg viewBox="0 0 16 14" className="h-[13px] w-[15px]"><path d="M0 7l7-6v4h8v4H7v4z" fill="#a9a9a9" /></svg></button>
      <button type="button" aria-label="Up one level"><svg viewBox="0 0 16 16" className="size-4"><path d="M1 1h5l2 2h6v11H1z" fill="#f9a51a" /><path d="M8 14h4v-3H9l4-4 3 4h-1v4H8z" fill="#3f86c9" /></svg></button>
      <button type="button" aria-label="Search the web"><svg viewBox="0 0 16 16" className="size-4" fill="none"><circle cx="7" cy="7" r="6" fill="#d7ecfb" stroke="#2d83cf" strokeWidth="1.300" /><path d="M1 7h12M7 1v12M3 3c3 2 5 2 8 0M3 11c3-2 5-2 8 0M7 1C3 4 3 10 7 13M7 1c4 3 4 9 0 12" stroke="#2d83cf" /><circle cx="11" cy="10.500" r="2.500" fill="#eee" stroke="#999" /><path d="M13 12l2.500 3" stroke="#999" strokeWidth="1.500" /></svg></button>
      <button type="button" aria-label="Delete" className="text-[#a3a3a3]"><Icon name="close" className="size-[17px]" /></button>
      <button type="button" aria-label="New folder"><svg viewBox="0 0 16 16" className="size-4"><path d="M1 1h5l2 2h6v11H1z" fill="#f9a51a" /><path d="M12.500 9v6M9.500 12h6" stroke="#2ba24c" strokeWidth="2" /></svg></button>
      <button type="button" className="ml-[9px] flex items-center gap-[10px]"><span><u>V</u>iews</span><Icon name="caretBig" className="size-2" /></button>
      <button type="button" className="flex items-center gap-[10px]"><span>Too<u>l</u>s</span><Icon name="caretBig" className="size-2" /></button>
    </div>
  );
}

function SaveDialog() {
  const fileName = useRef<HTMLInputElement>(null);

  useEffect(() => {
    fileName.current?.focus();
    fileName.current?.select();
  }, []);

  return (
    <div role="dialog" aria-label="Browse for Plot File" className={`absolute top-[70px] left-[318px] w-[567px] border border-[#1b6fc4] bg-[#f1f1f2] text-[#2b2b2b] ${FORM_FONT}`}>
      <div className={`flex h-[27px] items-center bg-[#0173dc] pr-2 pl-[6px] text-[10px] text-[#e8f3fd] ${UI_FONT}`}>
        <span className="mr-1 flex size-[15px] items-center justify-center bg-white"><RedA className="size-3" /></span>
        Browse for Plot File
        <button type="button" aria-label="Close" className="ml-auto"><Icon name="close" className="size-[11px]" /></button>
      </div>
      <div className="flex gap-[9px] pt-[6px] pr-[8px] pb-[9px] pl-[3px]">
        <div className="flex w-[101px] shrink-0 flex-col gap-[4px]">
          <label htmlFor="save-in" className="h-[21px] text-right text-[10px] leading-[18px]">Save in:</label>
          <Places />
        </div>
        <div className="min-w-0 flex-1">
          <div className="flex h-[25px] items-start">
            <div className="relative w-[216px] shrink-0">
              <select id="save-in" className="block h-[21px] w-full appearance-none border border-[#bdbdbd] bg-[#e2e2e3] pl-[19px] text-[10px]"><option>Desktop</option></select>
              <Screen className="absolute top-[5px] left-1 h-[11px] w-[14px]" />
              <Chevron className="absolute top-[8px] right-[3px] h-[5px] w-2 text-[#777]" />
            </div>
            <DialogTools />
          </div>
          <FileList />
          <div className="flex h-[15px] items-center text-[#444]">
            <button type="button" aria-label="Scroll left" className="flex w-[15px] justify-center"><Chevron className="h-[5px] w-2 rotate-90" /></button>
            <span className="h-[13px] flex-[339] bg-[#cdcdcd]" /><span className="flex-[75]" />
            <button type="button" aria-label="Scroll right" className="flex w-[15px] justify-center"><Chevron className="h-[5px] w-2 -rotate-90" /></button>
          </div>
          <form className="mt-[26px] grid grid-cols-[66px_1fr_73px] items-center gap-x-[2px] gap-y-[8px] pr-[2px] text-[10px]">
            <label htmlFor="file-name" className="self-start pl-px">File name:</label>
            <div className="relative">
              <input id="file-name" ref={fileName} defaultValue="chi tiết lắp đặt cấp thoát nước-Model.pdf" className="block h-5 w-full border border-[#2b87d8] bg-white px-px outline-none selection:bg-[#1173d0] selection:text-[#cfe6fb]" />
              <Chevron className="absolute top-[8px] right-[3px] h-[5px] w-2 text-[#777]" />
              {/* mouse pointer */}
              <svg viewBox="0 0 10 16" className="absolute top-[3px] left-[74px] h-4 w-[10px]"><path d="M.500.500v12.500l3-2.500 2 4.500 2-1-2-4.500h4z" fill="#fff" stroke="#333" /></svg>
            </div>
            <button type="button" className="ml-[2px] h-[18px] border border-[#c4c4c4] bg-[#e1e1e1] leading-4"><u>S</u>ave</button>
            <label htmlFor="file-type" className="self-start pl-px">Files of type:</label>
            <div className="relative">
              <select id="file-type" className="block h-[19px] w-full appearance-none border border-[#bdbdbd] bg-[#e2e2e3] pl-[3px]"><option>PDF (*.pdf)</option></select>
              <Chevron className="absolute top-[7px] right-[3px] h-[5px] w-2 text-[#777]" />
            </div>
            <button type="button" className="ml-[2px] h-[18px] border border-[#c4c4c4] bg-[#e1e1e1] leading-4">Cancel</button>
          </form>
        </div>
      </div>
    </div>
  );
}

export default function App() {
  return (
    <div className={`relative flex h-screen flex-col overflow-hidden bg-black ${UI_FONT}`}>
      <Header />
      <FileTabs />
      <Toolbars />
      <Workspace />
      <CommandLine />
      <StatusBar />
      <SaveDialog />
    </div>
  );
}
